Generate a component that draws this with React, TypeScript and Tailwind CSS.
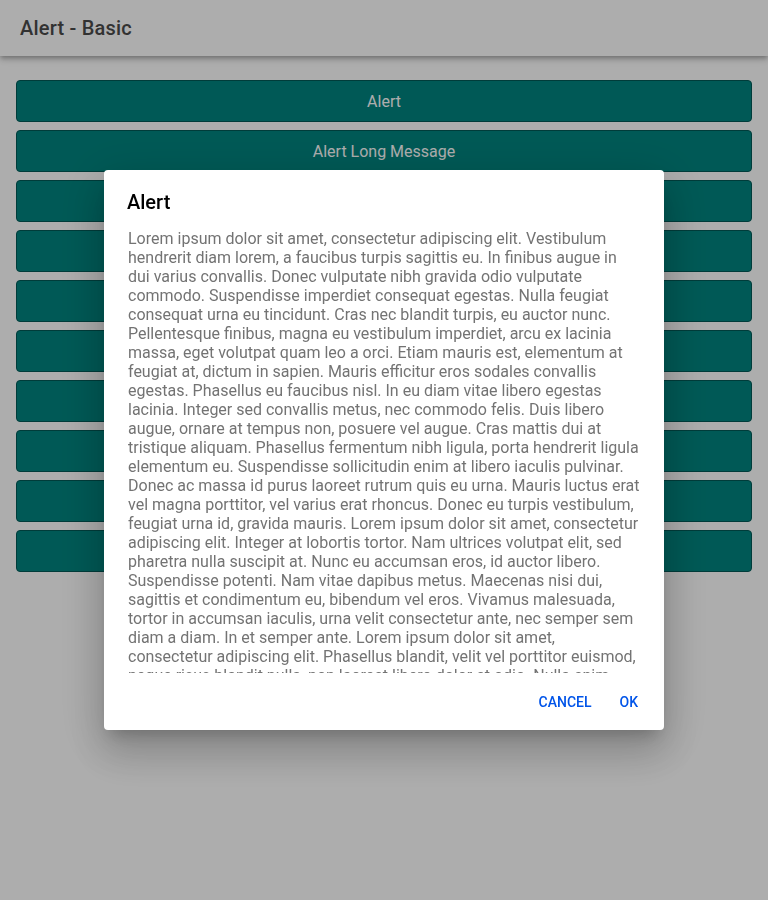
const buttons = [
  'Alert',
  'Alert Long Message',
  'Multiple Buttons',
  'Alert No Message',
  'Confirm',
  'Prompt',
  'Radio',
  'Checkbox',
  'Alert From Controller',
  'Custom Class',
];

const message =
  'Lorem ipsum dolor sit amet, consectetur adipiscing elit. Vestibulum hendrerit diam lorem, a faucibus turpis sagittis eu. In finibus augue in dui varius convallis. Donec vulputate nibh gravida odio vulputate commodo. Suspendisse imperdiet consequat egestas. Nulla feugiat consequat urna eu tincidunt. Cras nec blandit turpis, eu auctor nunc. Pellentesque finibus, magna eu vestibulum imperdiet, arcu ex lacinia massa, eget volutpat quam leo a orci. Etiam mauris est, elementum at feugiat at, dictum in sapien. Mauris efficitur eros sodales convallis egestas. Phasellus eu faucibus nisl. In eu diam vitae libero egestas lacinia. Integer sed convallis metus, nec commodo felis. Duis libero augue, ornare at tempus non, posuere vel augue. Cras mattis dui at tristique aliquam. Phasellus fermentum nibh ligula, porta hendrerit ligula elementum eu. Suspendisse sollicitudin enim at libero iaculis pulvinar. Donec ac massa id purus laoreet rutrum quis eu urna. Mauris luctus erat vel magna porttitor, vel varius erat rhoncus. Donec eu turpis vestibulum, feugiat urna id, gravida mauris. Lorem ipsum dolor sit amet, consectetur adipiscing elit. Integer at lobortis tortor. Nam ultrices volutpat elit, sed pharetra nulla suscipit at. Nunc eu accumsan eros, id auctor libero. Suspendisse potenti. Nam vitae dapibus metus. Maecenas nisi dui, sagittis et condimentum eu, bibendum vel eros. Vivamus malesuada, tortor in accumsan iaculis, urna velit consectetur ante, nec semper sem diam a diam. In et semper ante. Lorem ipsum dolor sit amet, consectetur adipiscing elit. Phasellus blandit, velit vel porttitor euismod, neque risus blandit nulla, non laoreet libero dolor et odio. Nulla enim arcu, euismod vel pharetra sit amet, cursus et magna. Aliquam erat volutpat.';

function AlertDialog() {
  return (
    <div className="fixed inset-0 z-10 flex items-center justify-center bg-black/[0.32]">
      <div
        role="dialog"
        aria-modal="true"
        className="w-[560px] h-[560px] flex flex-col rounded bg-white shadow-[0_11px_15px_-7px_rgba(0,0,0,0.2),0_24px_38px_3px_rgba(0,0,0,0.14),0_9px_46px_8px_rgba(0,0,0,0.12)]"
      >
        <div className="pt-5 pl-[23px] pr-6 pb-[15px]">
          <h2 className="text-[20px] leading-6 font-medium text-black">Alert</h2>
        </div>
        <div className="h-[444px] overflow-hidden px-6 text-[16px] leading-[19px] text-[#737373]">
          {message}
        </div>
        <div className="flex justify-end items-start pt-[11px] pr-2">
          <button
            type="button"
            className="h-9 px-[10px] mr-2 text-[14px] font-medium uppercase text-[#0054e9]"
          >
            Cancel
          </button>
          <button
            type="button"
            className="h-9 px-[10px] mr-2 text-[14px] font-medium uppercase text-[#0054e9]"
          >
            Ok
          </button>
        </div>
      </div>
    </div>
  );
}

export default function App() {
  return (
    <div className="min-h-[900px] bg-white font-['Roboto',sans-serif]">
      <header className="h-14 flex items-center px-5 bg-white shadow-[0_2px_4px_-1px_rgba(0,0,0,0.2),0_4px_5px_0_rgba(0,0,0,0.14),0_1px_10px_0_rgba(0,0,0,0.12)]">
        <h1 className="text-[20px] font-medium text-[#4b4b4b] tracking-[0.01em]">Alert - Basic</h1>
      </header>
      <main className="px-4 pt-6 flex flex-col gap-2">
        {buttons.map(label => (
          <button
            key={label}
            type="button"
            className="h-[42px] w-full pt-0.5 rounded border border-[#005956] bg-[#00847f] text-[16px] text-white"
          >
            {label}
          </button>
        ))}
      </main>
      <AlertDialog />
    </div>
  );
}
